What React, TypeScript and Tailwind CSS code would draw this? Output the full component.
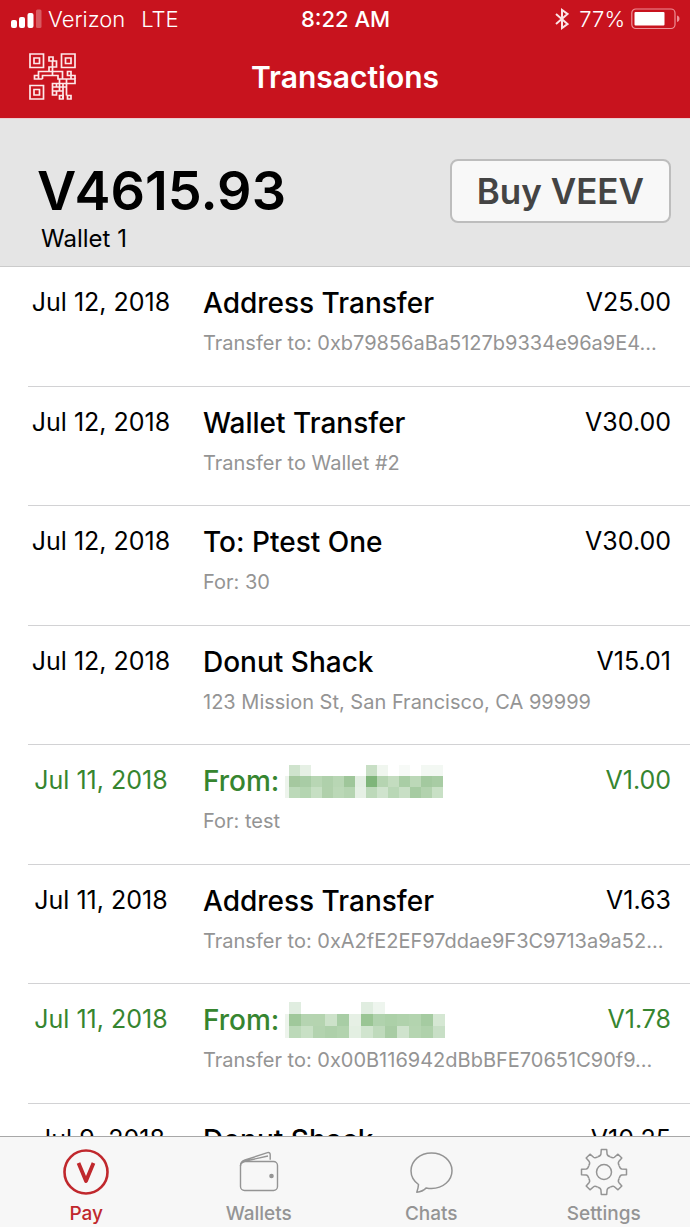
import React from "react";

type Transaction = {
  date: string;
  title: string;
  detail: string;
  amount: string;
  incoming?: boolean;
  mask?: Mosaic;
};

type Mosaic = { cell: number; rows: string[][] };

const maskA: Mosaic = {
  cell: 11,
  rows: [
    ["#cfe3cd", "#e6f0e5", "", "", "", "", "", "#c8dfc5", "#f0f6ef", "", "#f7faf7", "", "#f3f8f3", "#f3f8f3"],
    ["#a5c89f", "#a8cca5", "#b8d6b4", "#afd0ab", "#b8d6b4", "#9fc69a", "#e3eee2", "#7fb57a", "#b5d4b1", "#c3dcbf", "#a9cda5", "#bcd8b8", "#a3c99f", "#a8cca4"],
    ["#bcd9b9", "#b4d5b1", "#c6dfc3", "#b0d0ab", "#bbd8b7", "#b5d4b1", "#e6f0e5", "#bdd9ba", "#cfe3cd", "#b9d7b6", "#c8dfc5", "#a6cba2", "#b2d2ae", "#c8e0c5"],
  ],
};

const maskB: Mosaic = {
  cell: 12,
  rows: [
    ["#e0ede0", "", "", "", "", "", "#e0ede0", "#eef5ee", "", "", "", "", ""],
    ["#a0c89b", "#b5d4b1", "#b5d4b0", "#cde2ca", "#a8cda5", "#e6f0e5", "#9ac594", "#b0d2ad", "#acd0a8", "#b0d2ac", "#b3d4af", "#a5cba1", "#d5e7d3"],
    ["#bcd9b9", "#c8e0c5", "#b3d3af", "#aed0aa", "#b2d3ae", "#e3efe2", "#d0e4ce", "#bfdabc", "#a8cca4", "#cfe3cd", "#b5d5b1", "#afd1ab", "#c8dfc6"],
  ],
};

const transactions: Transaction[] = [
  { date: "Jul 12, 2018", title: "Address Transfer", detail: "Transfer to: 0xb79856aBa5127b9334e96a9E4...", amount: "V25.00" },
  { date: "Jul 12, 2018", title: "Wallet Transfer", detail: "Transfer to Wallet #2", amount: "V30.00" },
  { date: "Jul 12, 2018", title: "To: Ptest One", detail: "For: 30", amount: "V30.00" },
  { date: "Jul 12, 2018", title: "Donut Shack", detail: "123 Mission St, San Francisco, CA 99999", amount: "V15.01" },
  { date: "Jul 11, 2018", title: "From:", detail: "For: test", amount: "V1.00", incoming: true, mask: maskA },
  { date: "Jul 11, 2018", title: "Address Transfer", detail: "Transfer to: 0xA2fE2EF97ddae9F3C9713a9a52...", amount: "V1.63" },
  { date: "Jul 11, 2018", title: "From:", detail: "Transfer to: 0x00B116942dBbBFE70651C90f9...", amount: "V1.78", incoming: true, mask: maskB },
  { date: "Jul 9, 2018", title: "Donut Shack", detail: "123 Mission St, San Francisco, CA 99999", amount: "V10.25" },
];

function MosaicBlock({ cell, rows }: Mosaic) {
  const height = rows.length * cell;
  return (
    <svg width={rows[0].length * cell + 4} height={height} shapeRendering="crispEdges" aria-label="Hidden name">
      <rect x="0" y={cell} width="4" height={cell * 2} fill="#edf4ec" />
      {rows.map((row, y) =>
        row.map((fill, x) =>
          fill ? <rect key={`${x}-${y}`} x={4 + x * cell} y={y * cell} width={cell} height={cell} fill={fill} /> : null
        )
      )}
    </svg>
  );
}

function SignalIcon() {
  return (
    <svg width="31" height="20" viewBox="0 0 31 20" fill="#fff" aria-label="Signal strength">
      <rect x="0" y="11" width="6" height="8" rx="2" />
      <rect x="8" y="8" width="6" height="11" rx="2" />
      <rect x="16.500" y="4" width="6" height="15" rx="2" />
      <rect x="25" y="0.500" width="5.500" height="18.500" rx="1.500" opacity="0.3" />
    </svg>
  );
}

function BluetoothIcon() {
  return (
    <svg width="14" height="22" viewBox="0 0 14 22" fill="none" stroke="#fbe4e6" strokeWidth="2" aria-label="Bluetooth">
      <path d="M1 6l11.500 10L7 20V2L12.500 6 1 16" />
    </svg>
  );
}

function BatteryIcon() {
  return (
    <svg width="49" height="22" viewBox="0 0 49 22" aria-label="Battery">
      <rect x="0.800" y="1" width="43.200" height="19.500" rx="4" fill="none" stroke="#ee9097" strokeWidth="1.200" />
      <rect x="3.500" y="4" width="30" height="13.500" rx="1" fill="#fff" />
      <path d="M46 7.500c1.800.6 2.500 1.800 2.500 3.200s-.7 2.600-2.500 3.200z" fill="#ee9097" />
    </svg>
  );
}

function QrIcon() {
  return (
    <svg width="48" height="48" viewBox="0 0 48 48" fill="none" stroke="#fde9ea" strokeWidth="1.700">
      <path d="M1 1h13.500v13.500H1zM5 5h5.500v5.500H5zM32.500 1H46v13.500H32.500zM36.500 5H42v5.500h-5.500zM1 32.500h13.500V46H1zM5 36.500h5.500V42H5z" />
      <path d="M20 4h4v4h-4zM24 8h3.500v6H20v4.500M23.500 8v14" />
      <path d="M9.500 22.500v-4h24V26H46v4.500h-8.500v-4M13.500 26v-3.500H29V26h4.500M5.500 22.500h4V26h-4zM9.500 26h4" />
      <path d="M38.500 18.500h3.500v4h-3.500zM42 22.500h4V26M42 22.500V26" />
      <path d="M23.500 30.500h4v3.500h-4zM27.500 34h10M27.500 30.500h10M30.500 26v12M34 30v16M37.500 30v12.500M23.500 38h4v4h-4zM27.500 38H34M23.500 34v4" />
      <path d="M30.500 42.500H34V46h-3.500zM38.500 42.500H42V46h-3.500zM37.500 42.500h1" />
    </svg>
  );
}

function PayIcon() {
  return (
    <svg width="48" height="48" viewBox="0 0 48 48" fill="none" stroke="#c0282d">
      <circle cx="24" cy="24" r="21.500" strokeWidth="2.600" />
      <path d="M16.500 15l7.500 18 7.500-18" strokeWidth="3.800" strokeLinejoin="round" />
    </svg>
  );
}

function WalletIcon() {
  return (
    <svg width="48" height="48" viewBox="0 0 48 48" fill="none" stroke="#949494" strokeWidth="1.400">
      <rect x="5.500" y="13.500" width="37" height="29" rx="4" />
      <path d="M5.500 18c0-3.500 1.500-5 4.500-6l22.500-7.300c1.800-.5 2.700.3 2.700 2v5M6.500 15.500c.8-1.400 2-2 4-2.500l22.500-5" />
      <circle cx="36.500" cy="28" r="1.600" fill="#949494" />
    </svg>
  );
}

function ChatIcon() {
  return (
    <svg width="48" height="48" viewBox="0 0 48 48" fill="none" stroke="#949494" strokeWidth="1.500" strokeLinejoin="round">
      <path d="M24.500 5C13 5 4 12.800 4 22.700c0 6 3 10.500 7.500 13.800-.2 3-.7 5-1.700 7.800 4-.4 6.700-1.600 9.500-4.400 1.700.4 3.400.6 5.200.6 11.500 0 20.500-8 20.500-17.800S36 5 24.500 5z" />
    </svg>
  );
}

function GearIcon() {
  const steps = [0, 45, 90, 135, 180, 225, 270, 315];
  return (
    <svg width="48" height="48" viewBox="0 0 48 48" fill="none" stroke="#949494" strokeWidth="1.500" strokeLinejoin="round">
      {steps.map((angle) => (
        <path key={angle} transform={`rotate(${angle} 24 24)`} d="M17.700 8.800q3-.9 3.200-2.600l.4-4.700h5.400l.4 4.700q.2 1.700 3.200 2.600" />
      ))}
      <circle cx="24" cy="24" r="7.500" />
    </svg>
  );
}

const tabs = [
  { label: "Pay", href: "#pay", icon: <PayIcon />, active: true },
  { label: "Wallets", href: "#wallets", icon: <WalletIcon />, active: false },
  { label: "Chats", href: "#chats", icon: <ChatIcon />, active: false },
  { label: "Settings", href: "#settings", icon: <GearIcon />, active: false },
];

function TransactionRow({ item }: { item: Transaction }) {
  return (
    <li
      className={`grid h-[120px] shrink-0 grid-cols-[146px_1fr_auto] content-start gap-y-2 border-b border-[#d2d2d4] pt-[18px] pr-[19px] even:h-[119px] ${
        item.incoming ? "text-[#36852f]" : "text-black"
      }`}
    >
      <time className="text-center text-[25px] leading-[34px]">{item.date}</time>
      <h2 className="flex items-center gap-[6px] pl-[29px] text-[28px] leading-9 font-medium whitespace-nowrap">
        {item.title}
        {item.mask && <MosaicBlock {...item.mask} />}
      </h2>
      <span className="text-right text-[25px] leading-[34px]">{item.amount}</span>
      <p className="col-span-2 col-start-2 truncate pl-[29px] text-[20px] leading-7 text-[#949494]">{item.detail}</p>
    </li>
  );
}

export default function App() {
  return (
    <div className="flex h-screen flex-col overflow-hidden bg-white font-['Inter',sans-serif] text-black">
      <header className="bg-[#c8131e] pb-[2px] text-white">
        <div className="grid h-[38px] grid-cols-[1fr_auto_1fr] items-center pr-[10px] pl-[11px] text-[22px] leading-7">
          <div className="flex items-center gap-[6px] font-light">
            <SignalIcon />
            <span>Verizon</span>
            <span className="pl-[10px]">LTE</span>
          </div>
          <span className="font-medium">8:22 AM</span>
          <div className="flex items-center justify-end gap-[6px] font-light">
            <BluetoothIcon />
            <span className="pl-1">77%</span>
            <BatteryIcon />
          </div>
        </div>
        <div className="grid h-[78px] grid-cols-[1fr_auto_1fr] items-center px-[29px]">
          <button type="button" aria-label="Scan code" className="w-12">
            <QrIcon />
          </button>
          <h1 className="text-[30px] leading-10 font-semibold">Transactions</h1>
        </div>
      </header>

      <section className="flex h-[149px] shrink-0 items-start justify-between border-t border-b border-t-[#eccdd1] border-b-[#cbcbcb] bg-[#e5e5e5] pt-10 pr-[19px] pl-[37px]">
        <div>
          <p className="text-[54px] leading-[64px] font-semibold">V4615.93</p>
          <p className="pl-1 text-[24px] leading-8">Wallet 1</p>
        </div>
        <button
          type="button"
          className="h-16 rounded-lg border-2 border-[#bdbdbd] bg-[#f8f8f8] px-[25px] text-[35px] leading-10 font-semibold text-[#444]"
        >
          Buy VEEV
        </button>
      </section>

      <ul className="flex min-h-0 flex-1 flex-col overflow-y-auto pl-7 [scrollbar-width:none]">
        {transactions.map((item, i) => (
          <TransactionRow key={i} item={item} />
        ))}
      </ul>

      <nav className="grid shrink-0 grid-cols-4 border-t border-[#a8a8a8] bg-[#f7f7f7] pt-[11px]">
        {tabs.map((tab) => (
          <a
            key={tab.label}
            href={tab.href}
            className={`flex flex-col items-center gap-[5px] text-[19px] leading-[26px] font-medium ${
              tab.active ? "text-[#c0282d]" : "text-[#949494]"
            }`}
          >
            {tab.icon}
            {tab.label}
          </a>
        ))}
      </nav>
    </div>
  );
}
